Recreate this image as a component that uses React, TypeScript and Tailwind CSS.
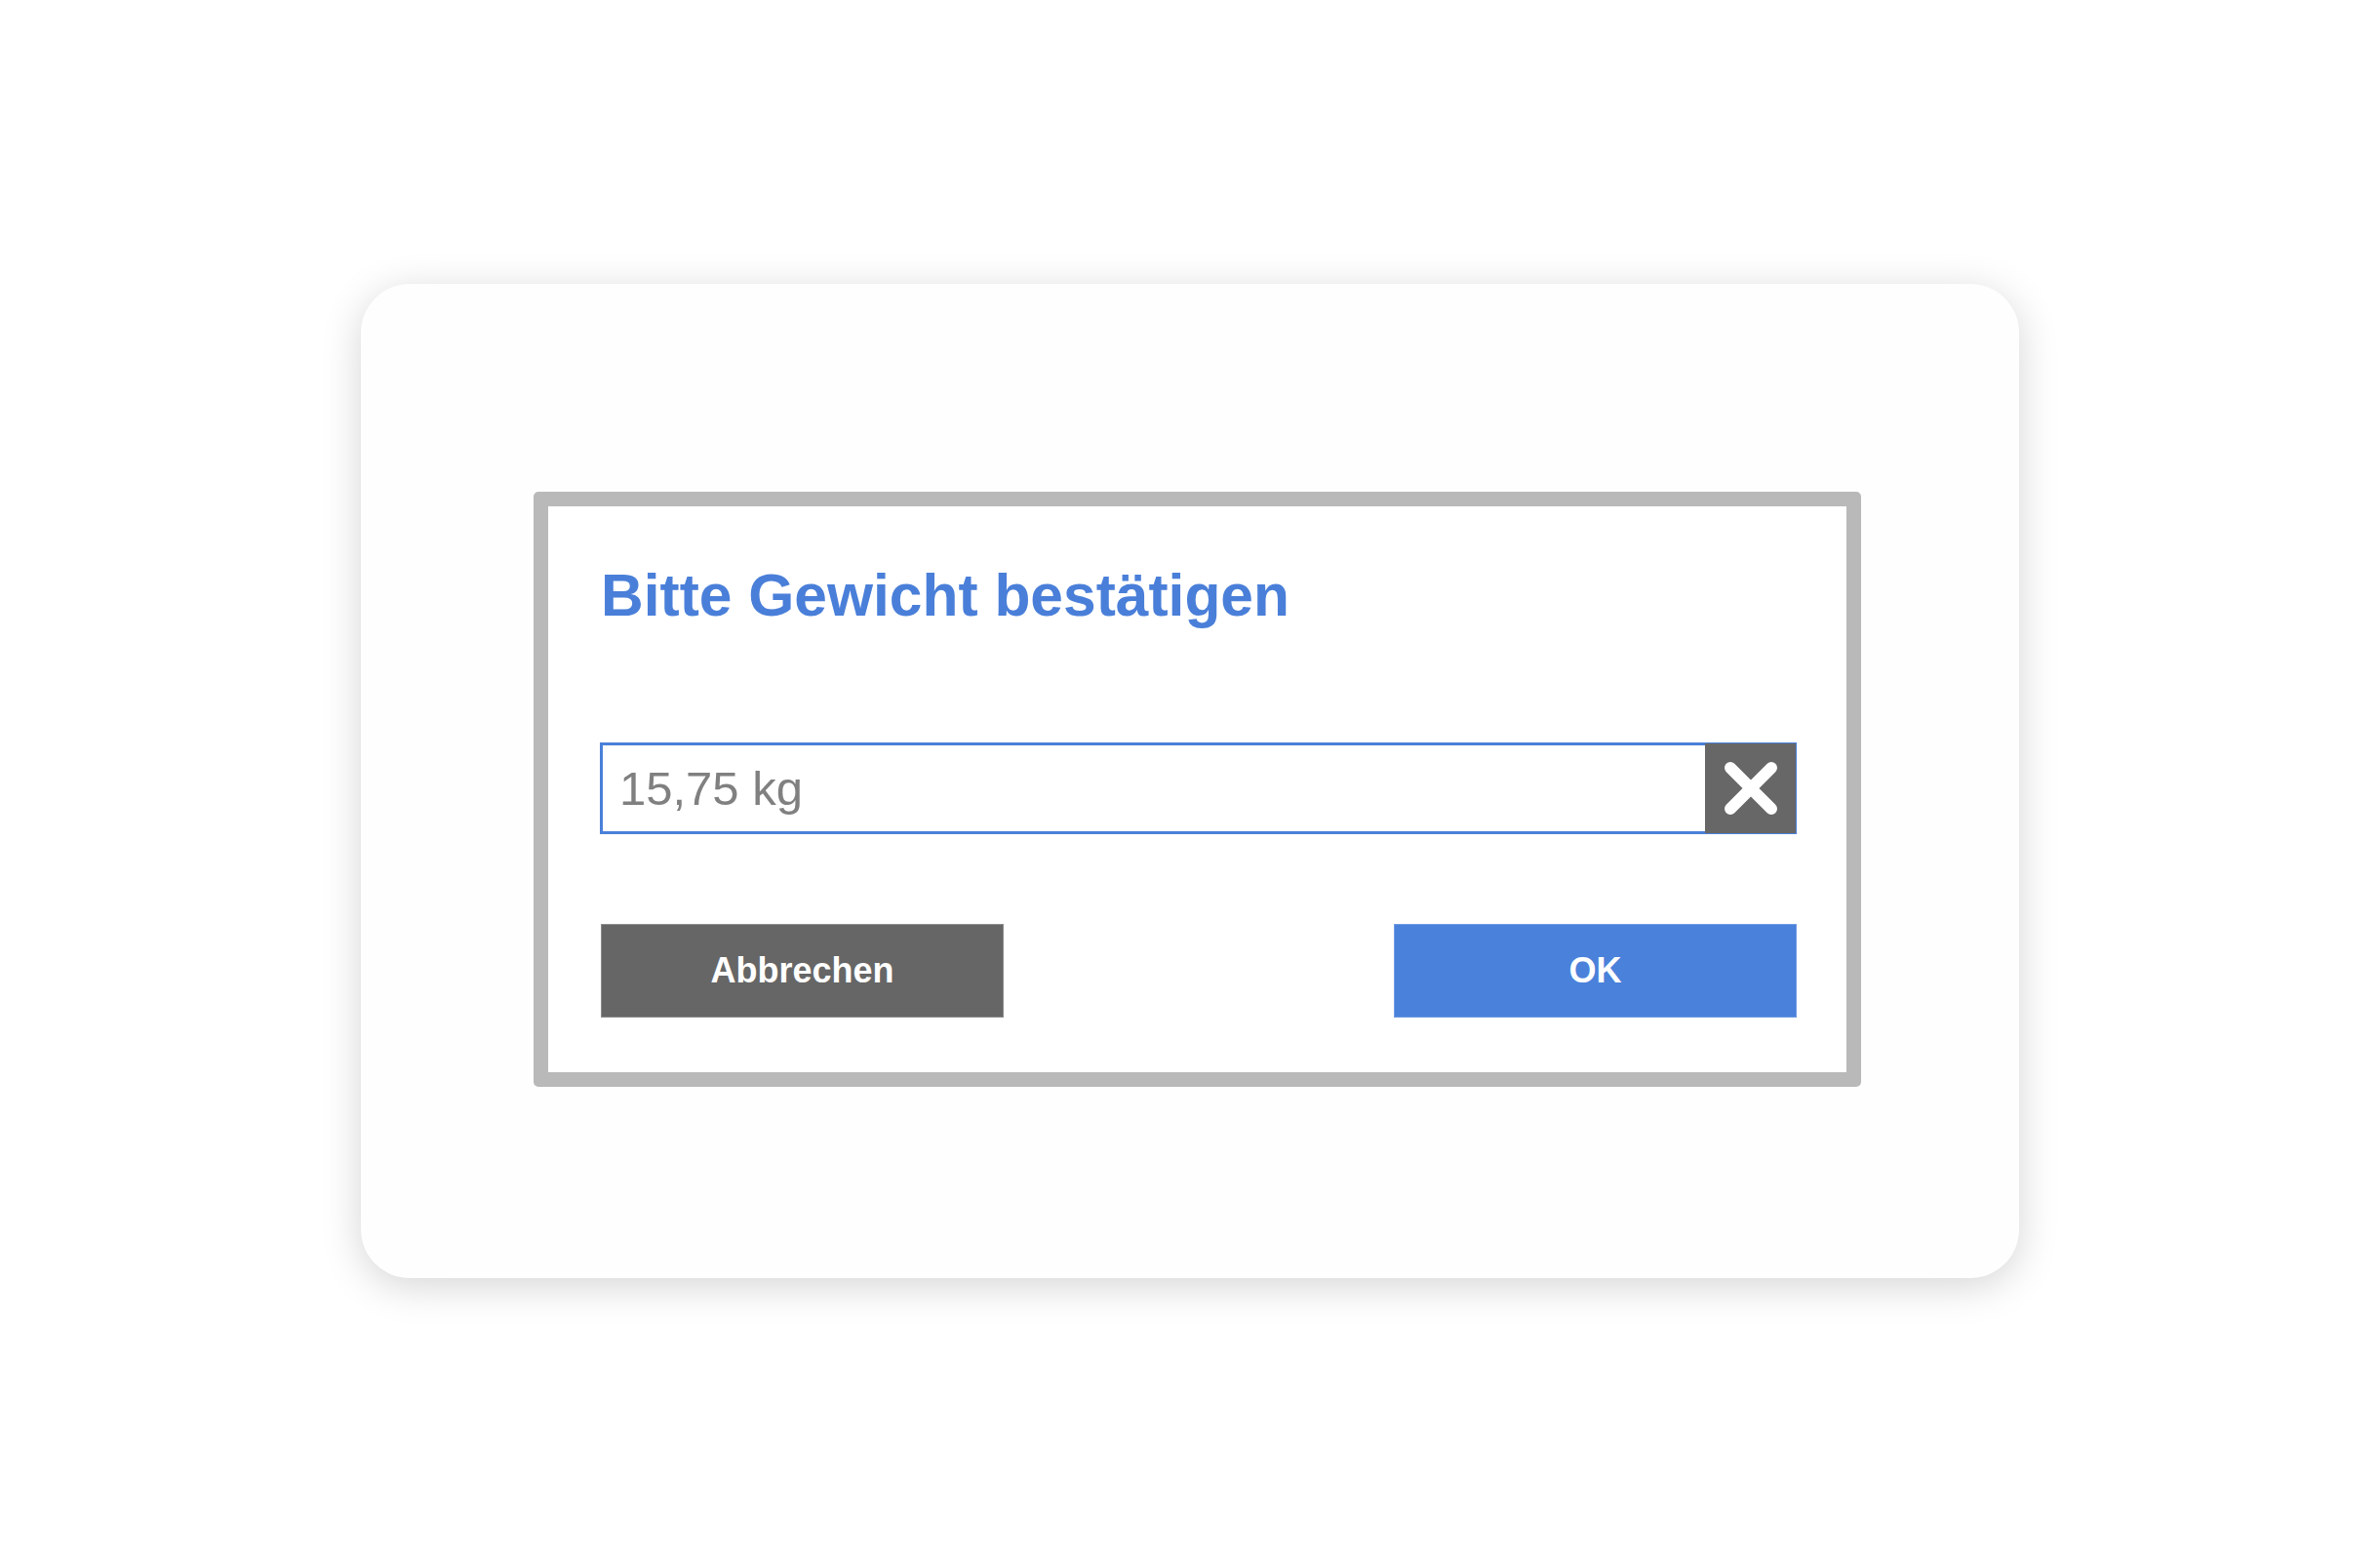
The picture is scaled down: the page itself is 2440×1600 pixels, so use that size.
import { useState } from 'react';

function ClearIcon() {
  return (
    <svg width="54" height="54" viewBox="0 0 54 54" fill="none">
      <path d="M6 6 L48 48 M48 6 L6 48" stroke="#ffffff" strokeWidth="12" strokeLinecap="round" />
    </svg>
  );
}

export default function App() {
  const [weight, setWeight] = useState('15,75 kg');

  return (
    <div
      className="flex min-h-screen items-center justify-center bg-white"
      style={{ fontFamily: '"Liberation Sans", Arial, Helvetica, sans-serif' }}
    >
      {/* shadow area is clipped at a hard edge in the reference */}
      <div className="overflow-hidden pt-[52px] pr-[50px] pb-[51px] pl-[50px]">
        <div className="w-[1700px] rounded-[50px] bg-[#fefefe] pt-[213px] pr-[162px] pb-[196px] pl-[177px] shadow-[0_8px_40px_rgba(0,0,0,0.17)]">
          <div className="rounded-[5px] border-[15px] border-[#b9b9b9] bg-white pt-[61px] pr-[51px] pb-[56px] pl-[54px]">
            <h1 className="text-[60.5px] font-bold leading-[61px] text-[#4a7fd9]">
              Bitte Gewicht bestätigen
            </h1>

            <div className="mt-[120px] -ml-px flex h-[94px] border border-[#4a80d9]">
              <div className="flex flex-1 items-center border-2 border-r-0 border-[#4a80d9] bg-white pl-[17px]">
                <input
                  value={weight}
                  onChange={e => setWeight(e.target.value)}
                  className="w-full bg-transparent text-[49px] leading-none text-[#808080] outline-none"
                />
              </div>
              <button
                type="button"
                onClick={() => setWeight('')}
                className="flex w-[93px] items-center justify-center bg-[#676767]"
              >
                <ClearIcon />
              </button>
            </div>

            <div className="mt-[92px] flex justify-between">
              <button
                type="button"
                className="flex h-[96px] w-[413px] items-center justify-center border border-[#8c8c8c] bg-[#666666] text-[36px] font-bold text-white"
              >
                Abbrechen
              </button>
              <button
                type="button"
                className="flex h-[96px] w-[413px] items-center justify-center border border-[#6f9ae3] bg-[#4a81da] text-[36px] font-bold text-white"
              >
                OK
              </button>
            </div>
          </div>
        </div>
      </div>
    </div>
  );
}
